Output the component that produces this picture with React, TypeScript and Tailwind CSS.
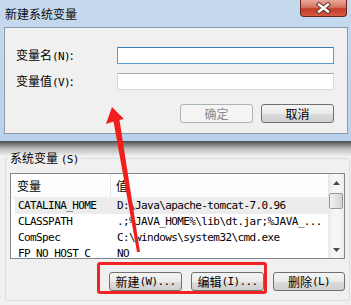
import React from "react";

const mono = "font-['DejaVu_Sans_Mono',monospace] text-[11px] tracking-[-0.6px]";

function Acc({ k, dots }: { k: string; dots?: boolean }) {
  return (
    <span className={mono + " leading-none"}>
      ({k}){dots ? "..." : ""}
    </span>
  );
}

function WinButton({
  children,
  disabled,
  width = "w-[73px]",
}: {
  children: React.ReactNode;
  disabled?: boolean;
  width?: string;
}) {
  return (
    <div
      className={
        "h-[19px] rounded-[3px] border flex items-center justify-center text-[12px] leading-none " +
        width +
        (disabled
          ? " border-[#adb2b5] bg-[#f4f4f4] text-[#8a8a8a]"
          : " border-[#707070] bg-[linear-gradient(#f4f4f4,#ebebeb_50%,#dddddd_50%,#cfcfcf)] text-black")
      }
    >
      {children}
    </div>
  );
}

const rows = [
  ["CATALINA_HOME", "D:\\Java\\apache-tomcat-7.0.96"],
  ["CLASSPATH", ".;%JAVA_HOME%\\lib\\dt.jar;%JAVA_..."],
  ["ComSpec", "C:\\windows\\system32\\cmd.exe"],
  ["FP_NO_HOST_C", "NO"],
];

export default function App() {
  return (
    <div className="relative w-[351px] h-[305px] overflow-hidden bg-[#f0f0f0] text-black font-['Noto_Sans_CJK_SC',sans-serif]">
      {/* dialog */}
      <div className="relative z-10 h-[141px] flex flex-col bg-[linear-gradient(#c6daee,#c2d7ec_30%,#b9d1ea)]">
        <div className="h-[27px] shrink-0 flex items-start justify-between">
          <span className="pl-[5px] pt-[7px] text-[12px] leading-[13px] text-[#0b0b0b]">
            新建系统变量
          </span>
          <div className="mr-[4px] w-[47px] h-[17px] rounded-b-[4px] border border-t-0 border-[#6b231b] bg-[linear-gradient(#e9a898,#d47463_45%,#c23c28_55%,#d65a40)] flex items-center justify-center">
            <svg width="15" height="12" viewBox="0 0 15 12">
              <path d="M3 2.5 L12 9.5 M12 2.5 L3 9.5" stroke="#5a2a25" strokeWidth="4.2" strokeLinecap="square" />
              <path d="M3 2.5 L12 9.5 M12 2.5 L3 9.5" stroke="#ffffff" strokeWidth="2.4" strokeLinecap="square" />
            </svg>
          </div>
        </div>
        <div className="ml-[4px] mr-[3px] h-[107px] shrink-0 border border-[#8b9bab] bg-[#f0f0f0] pl-[11px] pr-[13px] pt-[19px] flex flex-col">
          <div className="flex items-center h-[17px]">
            <span className="w-[102px] text-[12px] leading-none">
              变量名<Acc k="N" />:
            </span>
            <div className="w-[218px] h-[17px] bg-white border border-[#5b9bd1] border-t-[#3d7bad]" />
          </div>
          <div className="flex items-center h-[17px] mt-[9px]">
            <span className="w-[102px] text-[12px] leading-none">
              变量值<Acc k="V" />:
            </span>
            <div className="w-[218px] h-[17px] bg-white border border-[#d4dbe3] border-t-[#abadb3]" />
          </div>
          <div className="flex justify-end gap-[8px] mt-[14px]">
            <WinButton disabled>确定</WinButton>
            <WinButton>取消</WinButton>
          </div>
        </div>
        {/* drop shadow over the window below */}
        <div className="absolute left-0 right-0 top-full h-[15px] bg-gradient-to-b from-[rgba(20,20,20,0.75)] via-[rgba(60,60,60,0.3)] to-transparent" />
      </div>

      {/* underlying window */}
      <div className="pt-[11px] pl-[5px]">
        <fieldset className="w-[345px] h-[149px] border border-[#d5dfe5] rounded-[3px]">
          <legend className="ml-[2px] px-[2px] text-[12px] leading-[12px]">
            系统变量 <Acc k="S" />
          </legend>
          <div className="ml-[4px] mt-[8px] w-[335px] h-[86px] border border-[#828790] bg-white flex overflow-hidden">
            <div className="flex-1 flex flex-col overflow-hidden">
              <div className="h-[24px] shrink-0 flex border-b border-[#eef0f3] bg-[linear-gradient(#ffffff,#fafbfc)] text-[12px] leading-none">
                <div className="w-[100px] pl-[6px] flex items-center border-r border-[#e3e5e8]">变量</div>
                <div className="flex-1 pl-[5px] flex items-center">值</div>
              </div>
              {rows.map(([k, v], i) => (
                <div
                  key={k}
                  className={
                    "h-[16px] shrink-0 flex items-center ml-[4px] leading-[16px] " +
                    (i === 0 ? "bg-[#ececec]" : "")
                  }
                >
                  <div className={"w-[96px] pl-[3px] " + mono}>{k}</div>
                  <div className={"pl-[6px] whitespace-nowrap " + mono}>{v}</div>
                </div>
              ))}
            </div>
            <div className="w-[16px] shrink-0 flex flex-col bg-[linear-gradient(90deg,#e8e8e8,#f6f6f6_30%,#f6f6f6_70%,#ececec)]">
              <div className="h-[18px] shrink-0 flex items-center justify-center">
                <svg width="7" height="4" viewBox="0 0 7 4">
                  <path d="M0 4 L3.5 0 L7 4 Z" fill="#4a4a4a" />
                </svg>
              </div>
              <div className="mt-[1px] mx-[1px] h-[16px] shrink-0 rounded-[2px] border border-[#979797] bg-[linear-gradient(90deg,#f4f4f4,#e2e2e2_50%,#d4d4d4)]" />
              <div className="flex-1" />
              <div className="h-[17px] shrink-0 flex items-center justify-center">
                <svg width="7" height="4" viewBox="0 0 7 4">
                  <path d="M0 0 L7 0 L3.5 4 Z" fill="#4a4a4a" />
                </svg>
              </div>
            </div>
          </div>
          <div className="ml-[4px] mt-[13px] w-[335px] flex justify-end gap-[9px]">
            <WinButton>
              新建<Acc k="W" dots />
            </WinButton>
            <WinButton>
              编辑<Acc k="I" dots />
            </WinButton>
            <WinButton width="w-[72px]">
              删除<Acc k="L" />
            </WinButton>
          </div>
        </fieldset>
      </div>

      {/* annotation overlays */}
      <div className="absolute left-[97px] top-[262px] w-[170px] h-[32px] border-[3px] border-[#f32323] rounded-[3px] pointer-events-none z-20" />
      <svg className="absolute inset-0 z-20 pointer-events-none" width="351" height="305" viewBox="0 0 351 305">
        <polygon
          points="112,107 124,119 119.5,120 140,252 137,252 113.5,121.5 106,124"
          fill="#f21d1d"
        />
      </svg>
    </div>
  );
}
